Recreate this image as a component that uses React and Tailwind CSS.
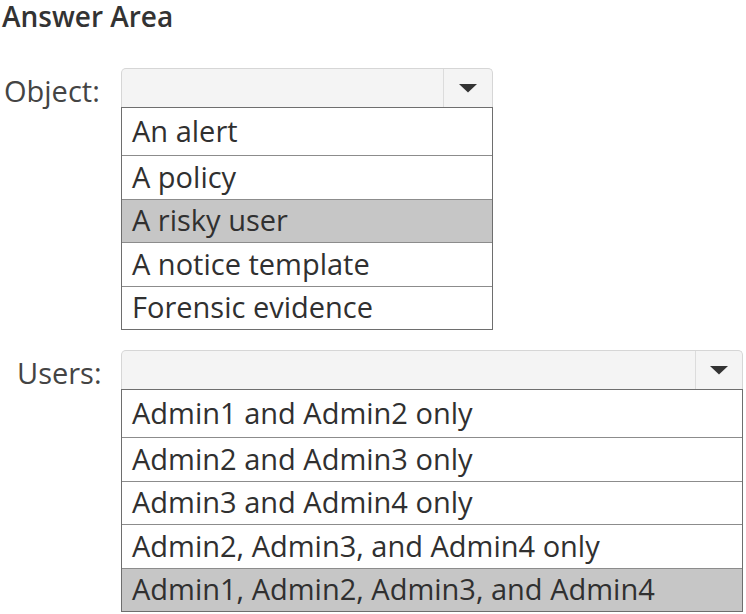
import React from "react";

function Arrow() {
  return (
    <svg width="20" height="10" viewBox="0 0 20 10" className="block">
      <path d="M1 1 L19 1 L10 9.5 Z" fill="#333333" />
    </svg>
  );
}

function Dropdown({ width, items, selected, arrowW }) {
  return (
    <div className="flex flex-col" style={{ width }}>
      <div className="flex h-[39px] rounded-t-[5px] border border-b-0 border-[#d6d6d6] bg-[#f4f4f4]">
        <div className="flex-1" />
        <div className="flex items-center justify-center border-l border-[#dcdcdc]" style={{ width: arrowW }}>
          <Arrow />
        </div>
      </div>
      <div className="flex flex-col border-[1.5px] border-[#6e6e6e] bg-white">
        {items.map((t, i) => (
          <div
            key={t}
            className={`flex items-center pl-[10px] text-[29px] leading-none text-[#303030] ${
              i > 0 ? "border-t-[1.5px] border-[#8c8c8c]" : ""
            } ${i === 0 ? "h-[47px]" : "h-[43.5px]"} ${i === selected ? "bg-[#c6c6c6]" : ""}`}
          >
            <span className="relative top-[-1px]">{t}</span>
          </div>
        ))}
      </div>
    </div>
  );
}

export default function App() {
  return (
    <div
      className="h-[614px] w-[746px] overflow-hidden bg-white text-[#303030]"
      style={{ fontFamily: '"Open Sans", "Noto Sans", sans-serif' }}
    >
      <div className="flex h-[30px] items-center pl-[2px] pt-[1px] text-[28px] font-semibold leading-none text-[#333]">
        Answer Area
      </div>
      <div className="mt-[38px] flex">
        <div className="flex h-[39px] w-[121px] items-center pl-[4px] text-[29px] text-[#444]">
          <span className="relative top-[3px]">Object:</span>
        </div>
        <Dropdown
          width={372}
          arrowW={49}
          selected={2}
          items={["An alert", "A policy", "A risky user", "A notice template", "Forensic evidence"]}
        />
      </div>
      <div className="mt-[20px] flex">
        <div className="flex h-[39px] w-[121px] items-center pl-[17px] text-[29px] text-[#444]">
          <span className="relative top-[3px]">Users:</span>
        </div>
        <Dropdown
          width={622}
          arrowW={47}
          selected={4}
          items={[
            "Admin1 and Admin2 only",
            "Admin2 and Admin3 only",
            "Admin3 and Admin4 only",
            "Admin2, Admin3, and Admin4 only",
            "Admin1, Admin2, Admin3, and Admin4",
          ]}
        />
      </div>
    </div>
  );
}
